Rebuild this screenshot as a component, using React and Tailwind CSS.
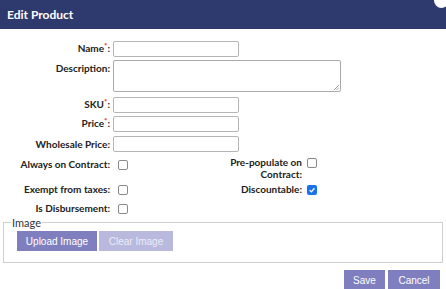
export default function App() {
  const label = "w-[113px] shrink-0 pr-[3px] text-right font-bold text-[10px] leading-[13px] text-[#222]";
  const input = "h-[16px] w-[126px] rounded-[2px] border border-[#b5b5b5] bg-white";
  const Req = () => <span className="relative -top-[3px] text-[#e0301e] text-[8px] font-bold">*</span>;
  const Box = ({ checked }) =>
    checked ? (
      <span className="flex h-[10px] w-[10px] items-center justify-center rounded-[2px] bg-[#1a73e8]">
        <svg viewBox="0 0 10 10" className="h-[8px] w-[8px]">
          <path d="M2 5.2 L4.2 7.3 L8 2.8" fill="none" stroke="white" strokeWidth="1.6" />
        </svg>
      </span>
    ) : (
      <span className="block h-[10px] w-[10px] rounded-[2px] border border-[#8a8a8a] bg-white" />
    );

  return (
    <div className="relative h-[289px] w-[446px] overflow-hidden bg-white font-['Lato',sans-serif]">
      <header className="flex h-[29px] items-center bg-[#2e3a6e] pl-[7px] text-[12px] font-bold text-white">
        Edit Product
      </header>
      <span className="absolute -right-[3px] -top-[7px] flex h-[15px] w-[15px] items-center justify-center rounded-full bg-white" />

      <div className="flex flex-col pt-[12px]">
        <div className="flex items-center">
          <span className={label}>
            Name<Req />:
          </span>
          <span className={input} />
        </div>
        <div className="mt-[3px] flex items-start">
          <span className={label + " pt-[2px]"}>Description:</span>
          <span className="relative h-[32px] w-[228px] rounded-[2px] border border-[#aaa] bg-white">
            <svg viewBox="0 0 6 6" className="absolute bottom-[1px] right-[1px] h-[6px] w-[6px]">
              <path d="M1 6 L6 1 M3.5 6 L6 3.5" stroke="#888" strokeWidth="0.8" />
            </svg>
          </span>
        </div>
        <div className="mt-[5px] flex items-center">
          <span className={label}>
            SKU<Req />:
          </span>
          <span className={input} />
        </div>
        <div className="mt-[3px] flex items-center">
          <span className={label}>
            Price<Req />:
          </span>
          <span className={input} />
        </div>
        <div className="mt-[4px] flex items-center">
          <span className={label}>Wholesale Price:</span>
          <span className={input} />
        </div>

        <div className="mt-[3px] flex items-start">
          <div className="flex w-[226px] items-center pt-[3px]">
            <span className={label}>Always on Contract:</span>
            <span className="ml-[5px]">
              <Box />
            </span>
          </div>
          <div className="flex items-start">
            <span className="w-[76px] text-right font-bold text-[10px] leading-[12px] text-[#222] pt-[1px]">
              Pre-populate on Contract:
            </span>
            <span className="ml-[5px] pt-[3px]">
              <Box />
            </span>
          </div>
        </div>

        <div className="mt-[3px] flex items-center">
          <div className="flex w-[226px] items-center">
            <span className={label}>Exempt from taxes:</span>
            <span className="ml-[5px]">
              <Box />
            </span>
          </div>
          <div className="flex items-center">
            <span className="w-[76px] text-right font-bold text-[10px] leading-[13px] text-[#222]">
              Discountable:
            </span>
            <span className="ml-[5px]">
              <Box checked />
            </span>
          </div>
        </div>

        <div className="mt-[6px] flex items-center">
          <span className={label}>Is Disbursement:</span>
          <span className="ml-[5px]">
            <Box />
          </span>
        </div>

        <fieldset className="mx-[3px] mt-[1px] h-[47px] border border-[#cfcfcf] pl-[7px]">
          <legend className="px-[1px] text-[11px] leading-[13px] text-[#333]">Image</legend>
          <div className="ml-[6px] mt-[2px] flex gap-[2px] font-['Liberation_Sans',Arial,sans-serif] text-[10px]">
            <button className="h-[20px] w-[80px] bg-[#7f7fbf] text-white">Upload Image</button>
            <button className="h-[20px] w-[74px] bg-[#b9b9dd] text-[#ececf6]">Clear Image</button>
          </div>
        </fieldset>

        <div className="mt-[7px] flex justify-end gap-[3px] pr-[6px] font-['Liberation_Sans',Arial,sans-serif] text-[10px]">
          <button className="h-[21px] w-[41px] bg-[#7f7fbf] text-white">Save</button>
          <button className="h-[21px] w-[52px] bg-[#7f7fbf] text-white">Cancel</button>
        </div>
      </div>
    </div>
  );
}
